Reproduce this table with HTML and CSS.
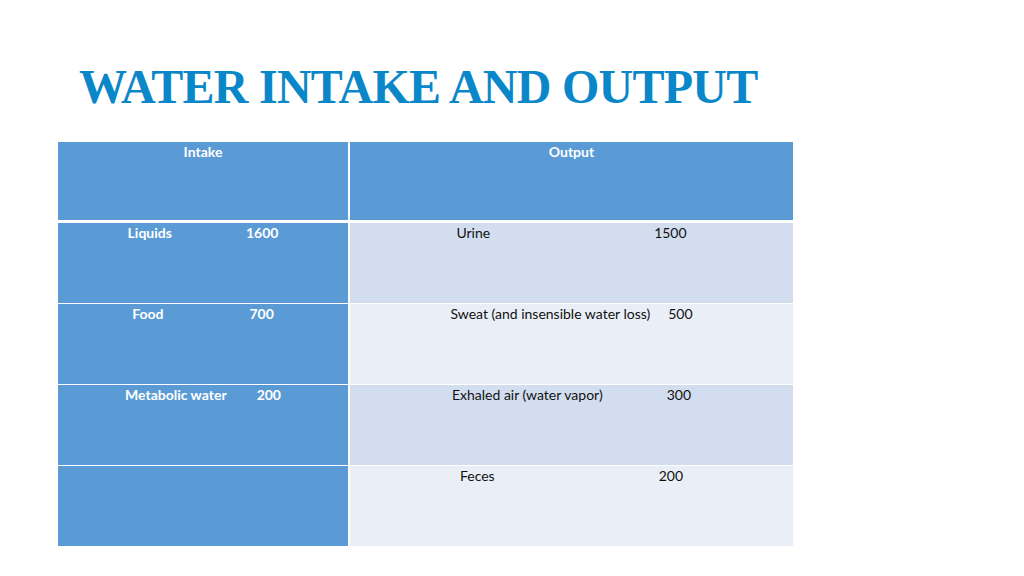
FILE: index.html
```html
<!DOCTYPE html>
<html>
<head>
<meta charset="utf-8">
<link rel="stylesheet" href="styles.css">
</head>
<body>
<div class="slide">
  <h1 class="title">WATER INTAKE AND OUTPUT</h1>
  <table class="grid">
    <thead>
      <tr class="head">
        <th class="c-in">Intake</th>
        <th class="c-out">Output</th>
      </tr>
    </thead>
    <tbody>
      <tr class="r-odd">
        <td class="c-in"><span class="pair"><span class="lbl">Liquids</span><span class="gap g1"></span><span>1600</span></span></td>
        <td class="c-out"><span class="pair"><span>Urine</span><span class="gap g5"></span><span>1500</span></span></td>
      </tr>
      <tr class="r-even">
        <td class="c-in"><span class="pair"><span>Food</span><span class="gap g2"></span><span>700</span></span></td>
        <td class="c-out"><span class="pair"><span>Sweat (and insensible water loss)</span><span class="gap g6"></span><span>500</span></span></td>
      </tr>
      <tr class="r-odd">
        <td class="c-in"><span class="pair"><span>Metabolic water</span><span class="gap g3"></span><span>200</span></span></td>
        <td class="c-out"><span class="pair"><span>Exhaled air (water vapor)</span><span class="gap g7"></span><span>300</span></span></td>
      </tr>
      <tr class="r-even">
        <td class="c-in"></td>
        <td class="c-out"><span class="pair"><span>Feces</span><span class="gap g8"></span><span>200</span></span></td>
      </tr>
    </tbody>
  </table>
</div>
</body>
</html>
```
FILE: styles.css
```css
html, body {
  margin: 0;
  padding: 0;
  background: #ffffff;
}
.slide {
  width: 1024px;
  height: 576px;
  padding: 58px 0 0 58px;
  box-sizing: border-box;
}
.title {
  margin: 0 0 0 21px;
  font-family: "Liberation Serif", "Times New Roman", serif;
  font-weight: bold;
  font-size: 48px;
  line-height: 58px;
  letter-spacing: -0.75px;
  color: #0a87c9;
  height: 84px;
}
.grid {
  border-collapse: collapse;
  width: 735px;
  table-layout: fixed;
  font-family: "Lato", "Open Sans", sans-serif;
  font-size: 14px;
}
.grid th, .grid td {
  height: 81px;
  padding: 1px 0 0 0;
  box-sizing: border-box;
  vertical-align: top;
  text-align: center;
  border-top: 1px solid #ffffff;
}
.grid .head th {
  height: 79px;
  border-top: 0;
}
.grid tbody tr:first-child td {
  border-top: 3px solid #ffffff;
  height: 82px;
}
.c-in {
  width: 291px;
  background: #5b9bd5;
  color: #ffffff;
  font-weight: bold;
  border-right: 2px solid #ffffff;
}
.head .c-out {
  background: #5b9bd5;
  color: #ffffff;
  font-weight: bold;
}
.r-odd .c-out {
  background: #d2deef;
  color: #111111;
}
.r-even .c-out {
  background: #eaeff7;
  color: #111111;
}
.pair {
  display: inline-flex;
  align-items: baseline;
}
.gap { display: inline-block; }
.g1 { width: 74px; }
.g2 { width: 86px; }
.g3 { width: 30px; }
.g5 { width: 164px; }
.g6 { width: 18px; }
.g7 { width: 64px; }
.g8 { width: 164px; }
```
